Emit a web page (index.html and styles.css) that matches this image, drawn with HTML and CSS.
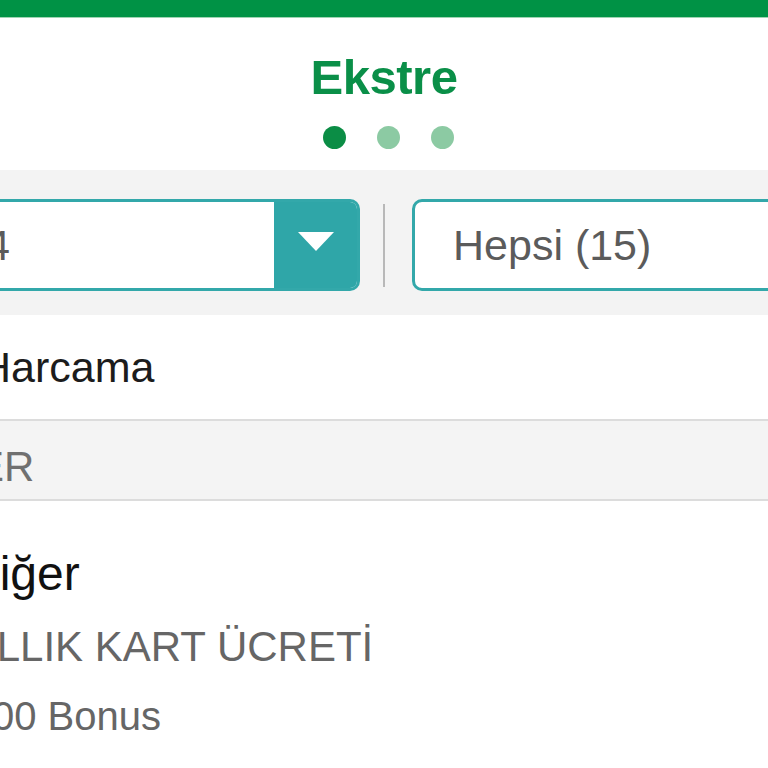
FILE: index.html
```html
<!DOCTYPE html>
<html lang="tr">
<head>
    <meta charset="UTF-8">
    <meta name="viewport" content="width=device-width, initial-scale=1.0">
    <title>Ekstre</title>
    <link rel="stylesheet" href="styles.css">
</head>
<body>
    <div class="topbar"></div>

    <header class="head">
        <h1 class="title">Ekstre</h1>
        <div class="dots">
            <span class="dot active"></span>
            <span class="dot"></span>
            <span class="dot"></span>
        </div>
    </header>

    <div class="filters">
        <div class="select">
            <span class="select-value value-period">4</span>
            <span class="select-btn"><span class="caret"></span></span>
        </div>
        <div class="divider"></div>
        <div class="select select-plain">
            <span class="select-value">Hepsi (15)</span>
        </div>
    </div>

    <div class="row total">
        <span class="total-label">Harcama</span>
    </div>

    <div class="row section">
        <span class="section-label">ER</span>
    </div>

    <div class="item">
        <div class="item-title">Diğer</div>
        <div class="item-desc">YILLIK KART ÜCRETİ</div>
        <div class="item-bonus">00 Bonus</div>
    </div>
</body>
</html>
```

FILE: styles.css
```css
html, body {
    margin: 0;
    padding: 0;
    overflow: hidden;
    background-color: #fff;
    font-family: "Liberation Sans", Arial, sans-serif;
}

.topbar {
    height: 17px;
    background-color: #009245;
    border-bottom: 1px solid #9fd4b3;
}

.head {
    padding: 29px 0 21px;
    text-align: center;
}

.title {
    margin: 0;
    font-size: 49px;
    line-height: 60px;
    font-weight: 700;
    letter-spacing: -0.5px;
    color: #0a8f48;
}

.dots {
    display: flex;
    justify-content: center;
    gap: 31px;
    margin-top: 19px;
    padding-left: 8px;
}

.dot {
    width: 23px;
    height: 23px;
    border-radius: 50%;
    background-color: #8ccaa3;
}

.dot.active {
    background-color: #0b8d45;
}

/* filter band */
.filters {
    display: flex;
    align-items: center;
    background-color: #f3f3f3;
    padding: 29px 0 24px;
}

.select {
    flex: none;
    display: flex;
    align-items: center;
    width: 400px;
    height: 92px;
    box-sizing: border-box;
    margin-left: -40px;
    background-color: #fff;
    border: 3px solid #33a8aa;
    border-radius: 10px;
    overflow: hidden;
}

.select-plain {
    width: 420px;
    margin-left: 27px;
}

.select-value {
    flex: 1;
    font-size: 43px;
    line-height: 48px;
    color: #5b5b5b;
    padding-left: 38px;
    white-space: nowrap;
}

.value-period {
    padding-left: 23px;
}

.select-btn {
    flex: none;
    width: 83px;
    align-self: stretch;
    display: flex;
    align-items: center;
    justify-content: center;
    background-color: #2fa6a8;
}

.caret {
    width: 0;
    height: 0;
    border-left: 18px solid transparent;
    border-right: 18px solid transparent;
    border-top: 19px solid #fff;
    margin-bottom: 7px;
}

.divider {
    flex: none;
    width: 2px;
    height: 83px;
    margin-left: 23px;
    background-color: #b8b8b8;
}

/* list rows */
.row {
    white-space: nowrap;
    border-bottom: 2px solid #dcdcdc;
}

.total {
    padding: 27px 0 27px;
    font-size: 43px;
    line-height: 50px;
    color: #1c1c1c;
}

.total-label {
    display: block;
    margin-left: -20px;
}

.section {
    background-color: #f4f4f4;
    padding: 21px 0 7px;
    font-size: 42px;
    line-height: 50px;
    color: #707070;
}

.section-label {
    display: block;
    margin-left: -24px;
}

.item {
    padding-top: 46px;
    white-space: nowrap;
}

.item-title {
    font-size: 48px;
    line-height: 54px;
    color: #111;
    margin-left: -35px;
}

.item-desc {
    margin-top: 21px;
    font-size: 42px;
    line-height: 50px;
    color: #666;
    margin-left: -43px;
}

.item-bonus {
    margin-top: 19px;
    font-size: 40px;
    line-height: 50px;
    color: #666;
    margin-left: -8px;
}
```
